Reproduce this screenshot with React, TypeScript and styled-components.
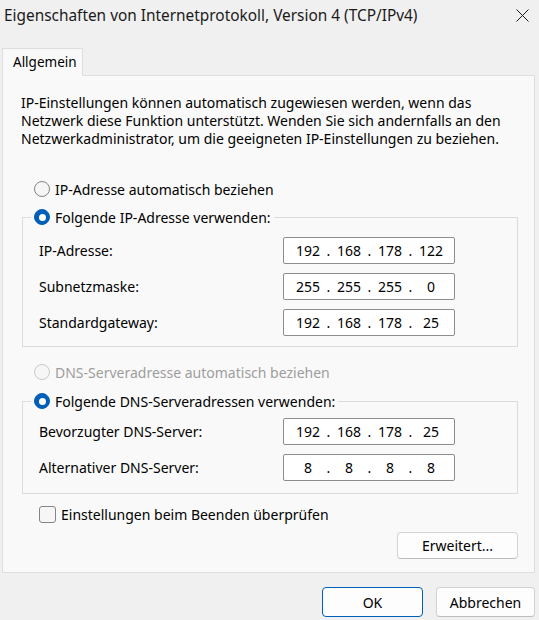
import styled, { createGlobalStyle } from 'styled-components';

const GlobalStyle = createGlobalStyle`
  html, body {
    margin: 0;
    padding: 0;
    background: #f0f0f0;
  }
  body {
    font-family: "Noto Sans", "Liberation Sans", sans-serif;
    color: #000;
  }
`;

const Window = styled.div`
  width: 539px;
  height: 620px;
  overflow: hidden;
  display: flex;
  flex-direction: column;
  background: #f0f0f0;
  font-size: 14px;
`;

const TitleBar = styled.div`
  height: 30px;
  display: flex;
  align-items: center;
  justify-content: space-between;
  padding: 0 10px 0 4px;
  font-size: 15.4px;
  color: #1a1a1a;
`;

const CloseButton = styled.div`
  display: flex;
  align-items: center;
`;

const TabStrip = styled.div`
  display: flex;
  margin-top: 18px;
  padding-left: 2px;
`;

const Tab = styled.div`
  position: relative;
  z-index: 1;
  box-sizing: border-box;
  height: 28px;
  width: 81px;
  margin-bottom: -1px;
  padding: 4px 0 0 10px;
  background: #f9f9f9;
  border: 1px solid #dedede;
  border-bottom: none;
  font-size: 13.5px;
`;

const Panel = styled.div`
  box-sizing: border-box;
  width: 533px;
  margin-left: 2px;
  display: flex;
  flex-direction: column;
  padding: 18px 16px 13px 19px;
  background: #f9f9f9;
  border: 1px solid #dedede;
`;

const Description = styled.p`
  margin: 0 0 0 -1px;
  font-size: 14px;
  line-height: 18px;
  white-space: nowrap;
`;

const RadioRow = styled.label<{ disabled?: boolean; indent?: number; top?: number }>`
  display: flex;
  align-items: center;
  gap: 5px;
  height: 20px;
  margin: ${(p) => p.top ?? 0}px 0 0 ${(p) => p.indent ?? 0}px;
  color: ${(p) => (p.disabled ? '#9d9d9d' : '#000')};
  white-space: nowrap;
`;

const RadioCircle = styled.span<{ checked?: boolean; disabled?: boolean }>`
  box-sizing: border-box;
  width: 16px;
  height: 16px;
  border-radius: 50%;
  flex: none;
  display: flex;
  align-items: center;
  justify-content: center;
  background: ${(p) => (p.checked ? '#005fb8' : '#f6f6f6')};
  border: 1px solid ${(p) => (p.checked ? '#005fb8' : p.disabled ? '#cacaca' : '#858585')};

  &::after {
    content: '';
    display: ${(p) => (p.checked ? 'block' : 'none')};
    width: 7px;
    height: 7px;
    border-radius: 50%;
    background: #fff;
  }
`;

const Group = styled.fieldset<{ top: number }>`
  margin: ${(p) => p.top}px 0 0 0;
  padding: 0;
  border: 1px solid #dcdcdc;
  min-inline-size: 0;
`;

const Legend = styled.legend`
  margin-left: 8px;
  padding: 0 3px;
`;

const FieldGrid = styled.div<{ top: number; bottom: number }>`
  display: grid;
  grid-template-columns: 244px 172px;
  row-gap: 9px;
  align-items: center;
  padding: ${(p) => p.top}px 0 ${(p) => p.bottom}px 16px;
`;

const FieldLabel = styled.span`
  white-space: nowrap;
`;

const IpBox = styled.div`
  box-sizing: border-box;
  height: 27px;
  display: flex;
  align-items: center;
  padding-left: 9px;
  background: #fff;
  border: 1px solid #8d8d8d;
  border-radius: 2px;
`;

const Octet = styled.span`
  width: 30px;
  text-align: center;
`;

const Dot = styled.span`
  width: 11px;
  text-align: center;
`;

const CheckRow = styled.label`
  display: flex;
  align-items: center;
  gap: 5px;
  height: 20px;
  margin: 10px 0 0 17px;
  white-space: nowrap;
`;

const CheckBox = styled.span`
  box-sizing: border-box;
  width: 17px;
  height: 17px;
  border-radius: 3px;
  border: 1px solid #858585;
  background: #f6f6f6;
`;

const Button = styled.button<{ primary?: boolean; width: number }>`
  box-sizing: border-box;
  width: ${(p) => p.width}px;
  height: ${(p) => (p.primary !== undefined ? 30 : 27)}px;
  padding: 0;
  font: inherit;
  font-size: 14px;
  color: #000;
  background: #fdfdfd;
  border: 1px solid ${(p) => (p.primary ? '#005fb8' : '#d3d3d3')};
  border-bottom-color: ${(p) => (p.primary ? '#005fb8' : '#bdbdbd')};
  border-radius: 4px;
`;

const AdvancedButton = styled(Button)`
  align-self: flex-end;
  margin-top: 8px;
`;

const Footer = styled.div`
  display: flex;
  justify-content: flex-end;
  gap: 13px;
  margin-top: 14px;
  padding-right: 4px;
`;

const IpField = ({ value }: { value: string }) => {
  const parts = value.split('.');
  return (
    <IpBox>
      {parts.map((p, i) => (
        <>
          {i > 0 && <Dot key={`d${i}`}>.</Dot>}
          <Octet key={`o${i}`}>{p}</Octet>
        </>
      ))}
    </IpBox>
  );
};

const Radio = ({ label, checked, disabled, indent, top }: { label: string; checked?: boolean; disabled?: boolean; indent?: number; top?: number }) => (
  <RadioRow disabled={disabled} indent={indent} top={top}>
    <RadioCircle checked={checked} disabled={disabled} />
    {label}
  </RadioRow>
);

export default function App() {
  return (
    <>
      <GlobalStyle />
      <Window>
        <TitleBar>
          <span>Eigenschaften von Internetprotokoll, Version 4 (TCP/IPv4)</span>
          <CloseButton>
            <svg width="13" height="13" viewBox="0 0 13 13">
              <path d="M0.5 0.5 L12.5 12.5 M12.5 0.5 L0.5 12.5" stroke="#1a1a1a" strokeWidth="1" fill="none" />
            </svg>
          </CloseButton>
        </TitleBar>
        <TabStrip>
          <Tab>Allgemein</Tab>
        </TabStrip>
        <Panel>
          <Description>
            IP-Einstellungen können automatisch zugewiesen werden, wenn das
            <br />
            Netzwerk diese Funktion unterstützt. Wenden Sie sich andernfalls an den
            <br />
            Netzwerkadministrator, um die geeigneten IP-Einstellungen zu beziehen.
          </Description>

          <Radio label="IP-Adresse automatisch beziehen" indent={12} top={31} />
          <Group top={8}>
            <Legend>
              <Radio label="Folgende IP-Adresse verwenden:" checked />
            </Legend>
            <FieldGrid top={10} bottom={10}>
              <FieldLabel>IP-Adresse:</FieldLabel>
              <IpField value="192.168.178.122" />
              <FieldLabel>Subnetzmaske:</FieldLabel>
              <IpField value="255.255.255.0" />
              <FieldLabel>Standardgateway:</FieldLabel>
              <IpField value="192.168.178.25" />
            </FieldGrid>
          </Group>

          <Radio label="DNS-Serveradresse automatisch beziehen" disabled indent={12} top={15} />
          <Group top={9}>
            <Legend>
              <Radio label="Folgende DNS-Serveradressen verwenden:" checked />
            </Legend>
            <FieldGrid top={7} bottom={12}>
              <FieldLabel>Bevorzugter DNS-Server:</FieldLabel>
              <IpField value="192.168.178.25" />
              <FieldLabel>Alternativer DNS-Server:</FieldLabel>
              <IpField value="8.8.8.8" />
            </FieldGrid>
          </Group>

          <CheckRow>
            <CheckBox />
            Einstellungen beim Beenden überprüfen
          </CheckRow>
          <AdvancedButton width={121}>Erweitert...</AdvancedButton>
        </Panel>
        <Footer>
          <Button primary width={101}>OK</Button>
          <Button primary={false} width={99}>Abbrechen</Button>
        </Footer>
      </Window>
    </>
  );
}
